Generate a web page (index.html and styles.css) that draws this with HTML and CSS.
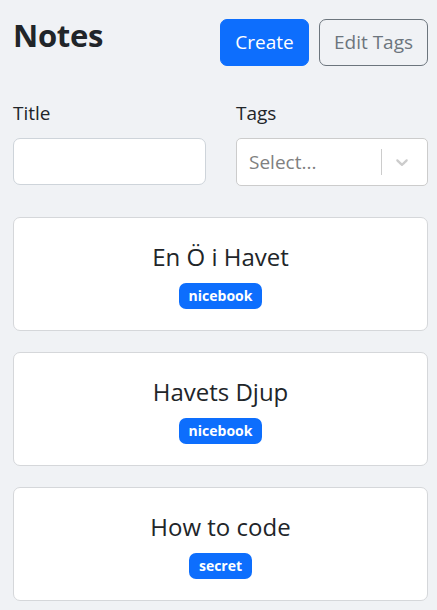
FILE: index.html
```html
<!DOCTYPE html>
<html lang="sv">
<head>
<meta charset="utf-8">
<title>Notes</title>
<link rel="stylesheet" href="styles.css">
</head>
<body>
<div class="container">
  <header class="header">
    <h1 class="title">Notes</h1>
    <div class="actions">
      <button class="btn btn-primary">Create</button>
      <button class="btn btn-outline">Edit Tags</button>
    </div>
  </header>
  <form class="filters">
    <div class="field">
      <label class="label" for="title">Title</label>
      <input class="input" id="title" type="text">
    </div>
    <div class="field">
      <label class="label">Tags</label>
      <div class="select">
        <span class="placeholder">Select...</span>
        <span class="indicators">
          <span class="sep"></span>
          <svg class="chevron" width="20" height="20" viewBox="0 0 20 20"><path d="M4.516 7.548c0.436-0.446 1.043-0.481 1.576 0l3.908 3.747 3.908-3.747c0.533-0.481 1.141-0.446 1.574 0 0.436 0.445 0.408 1.197 0 1.615-0.406 0.418-4.695 4.502-4.695 4.502-0.217 0.223-0.502 0.335-0.787 0.335s-0.57-0.112-0.789-0.335c0 0-4.287-4.084-4.695-4.502s-0.436-1.17 0-1.615z" fill="#cccccc"/></svg>
        </span>
      </div>
    </div>
  </form>
  <div class="notes">
    <a class="card">
      <span class="card-title">En Ö i Havet</span>
      <span class="badge">nicebook</span>
    </a>
    <a class="card">
      <span class="card-title">Havets Djup</span>
      <span class="badge">nicebook</span>
    </a>
    <a class="card">
      <span class="card-title">How to code</span>
      <span class="badge">secret</span>
    </a>
  </div>
</div>
</body>
</html>
```
FILE: styles.css
```css
* { box-sizing: border-box; }
html, body { margin: 0; padding: 0; }
body {
  background: #f0f2f5;
  font-family: "Open Sans", "Noto Sans", sans-serif;
  color: #212529;
  font-size: 19px;
}
.container {
  padding: 16px 9px 0 13px;
}
.header {
  display: flex;
  align-items: flex-start;
  justify-content: space-between;
  margin-bottom: 32px;
}
.title {
  margin: 0;
  font-size: 31px;
  font-weight: 700;
  line-height: 38px;
  letter-spacing: -0.3px;
}
.actions {
  display: flex;
  gap: 10px;
  margin-top: 3px;
}
.btn {
  font-family: inherit;
  font-size: 19px;
  height: 47px;
  padding: 0;
  border-radius: 7px;
  border: 1px solid transparent;
  line-height: 1;
  white-space: nowrap;
}
.btn-primary {
  background: #0d6efd;
  border-color: #0d6efd;
  color: #fff;
  width: 89px;
}
.btn-outline {
  background: transparent;
  border-color: #6c757d;
  color: #6c757d;
  width: 109px;
}
.filters {
  display: grid;
  grid-template-columns: 193px 1fr;
  column-gap: 30px;
  margin-bottom: 31px;
}
.field {
  display: flex;
  flex-direction: column;
}
.label {
  font-size: 19px;
  line-height: 30px;
  margin-bottom: 10px;
}
.input {
  height: 47px;
  border: 1px solid #ced4da;
  border-radius: 7px;
  background: #fff;
}
.select {
  height: 48px;
  border: 1px solid #cccccc;
  border-radius: 5px;
  background: #fff;
  display: flex;
  align-items: center;
  justify-content: space-between;
  padding-left: 12px;
}
.placeholder {
  color: #808080;
  font-size: 19px;
}
.indicators {
  display: flex;
  align-items: center;
  height: 100%;
}
.sep {
  width: 1px;
  height: 26px;
  background: #cccccc;
}
.chevron {
  margin: 0 15px 0 10px;
}
.notes {
  display: flex;
  flex-direction: column;
  gap: 21px;
}
.card {
  height: 114px;
  background: #fff;
  border: 1px solid #d5d7da;
  border-radius: 7px;
  display: flex;
  flex-direction: column;
  align-items: center;
  justify-content: center;
  gap: 8px;
  color: #212529;
  text-decoration: none;
}
.card-title {
  font-size: 24px;
  line-height: 36px;
}
.badge {
  background: #0d6efd;
  color: #fff;
  font-weight: 700;
  font-size: 14px;
  line-height: 1;
  padding: 6px 10px;
  border-radius: 7px;
}
```
